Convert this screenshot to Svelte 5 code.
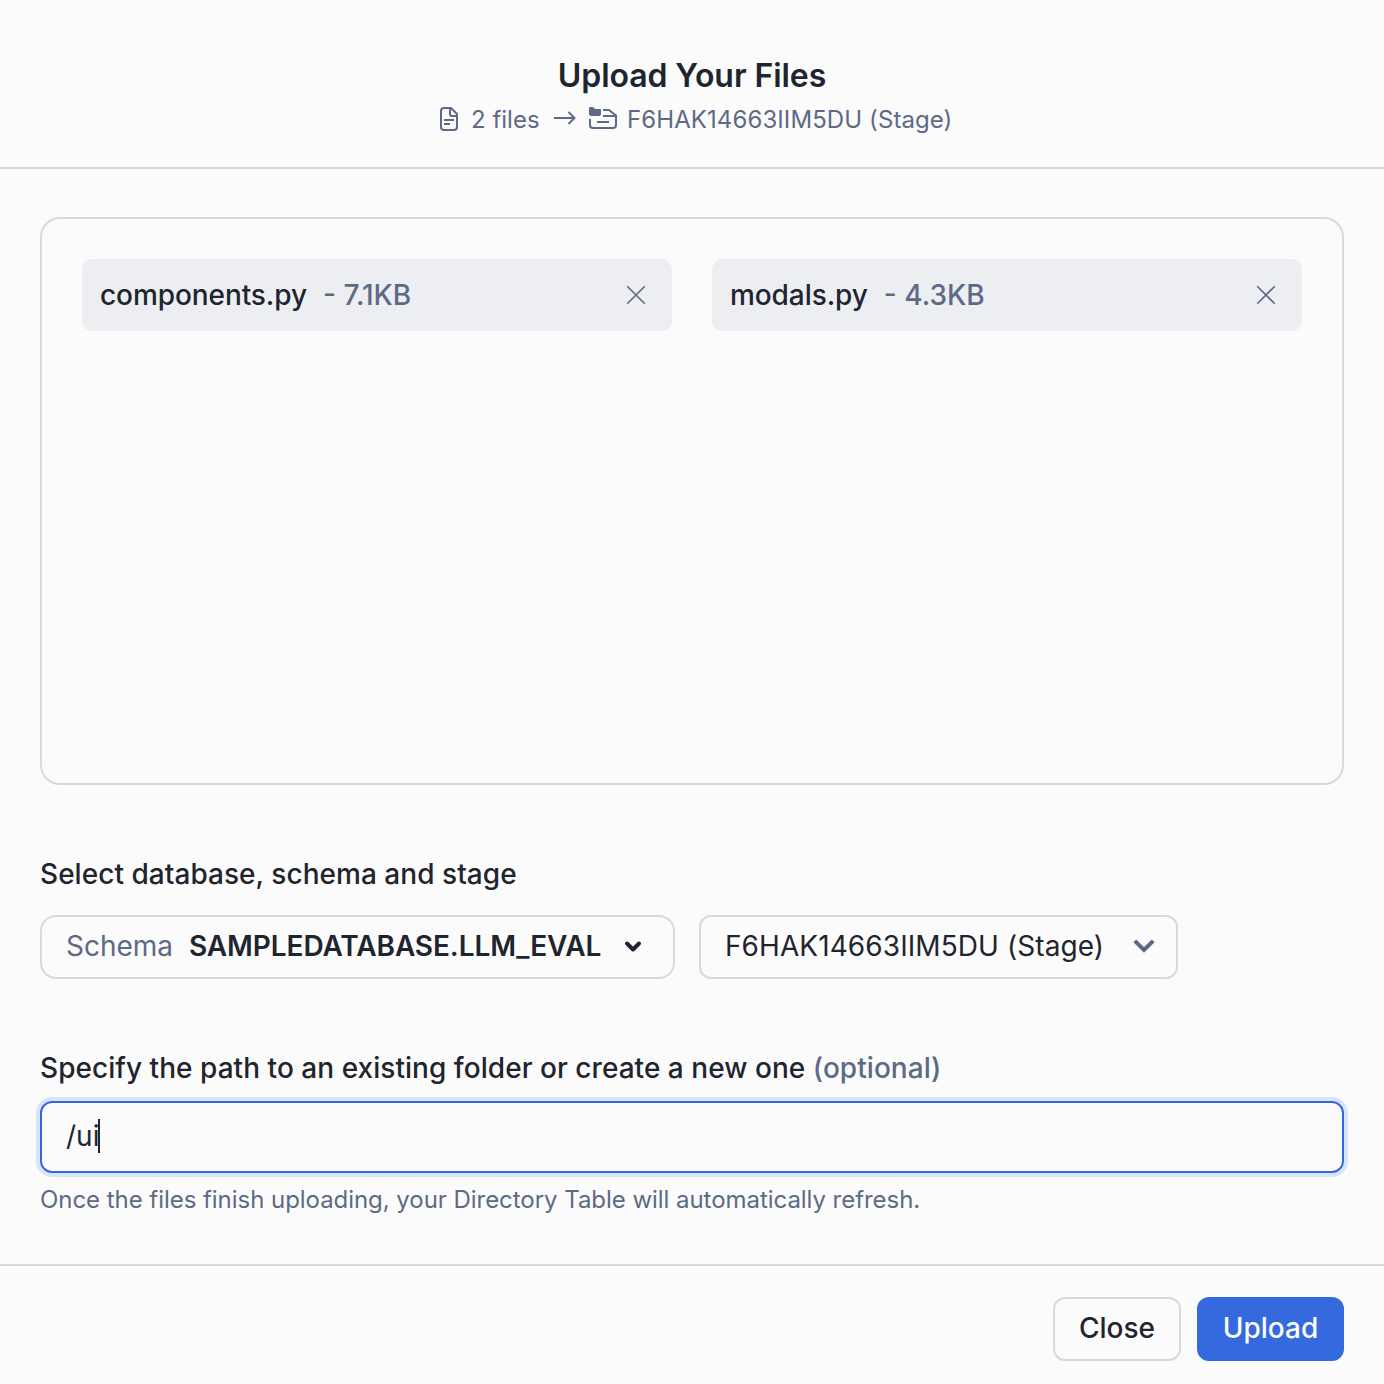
<script>
  const files = [
    { name: 'components.py', size: '7.1KB' },
    { name: 'modals.py', size: '4.3KB' }
  ];
  const stage = 'F6HAK14663IIM5DU (Stage)';
</script>

<div class="dialog">
  <header>
    <h1>Upload Your Files</h1>
    <div class="summary">
      <svg class="doc" width="20" height="26" viewBox="0 0 20 26" fill="none" stroke="currentColor" stroke-width="2">
        <path d="M5 2H12L18 8V21Q18 24 15 24H5Q2 24 2 21V5Q2 2 5 2Z" />
        <path d="M11 2V8Q11 10 13 10H18M5 14H15M5 18H11" />
      </svg>
      <span class="count">{files.length} files</span>
      <svg class="arrow" width="22" height="14" viewBox="0 0 22 14" fill="none" stroke="currentColor" stroke-width="1.9">
        <path d="M0 7H20.5M14.5 1L20.5 7L14.5 13" />
      </svg>
      <svg class="folder" width="28" height="24" viewBox="0 0 28 24">
        <path d="M0 2Q0 1 1 1H4L6 3H11Q12 3 12 4V8Q12 10 10 10H2Q0 10 0 8Z" fill="currentColor" />
        <path d="M14 4H20L27 9.5V19Q27 22 24 22H4Q1 22 1 19V13M14 10H27M8 16H20" fill="none" stroke="currentColor" stroke-width="2" />
      </svg>
      <span class="target">{stage}</span>
    </div>
  </header>

  <main>
    <div class="files">
      {#each files as file}
        <div class="file">
          <span class="name">{file.name}</span>
          <span class="size">- {file.size}</span>
          <svg width="20" height="20" viewBox="0 0 20 20" fill="none" stroke="currentColor" stroke-width="1.6">
            <path d="M1.2 1.2L18.8 18.8M18.8 1.2L1.2 18.8" />
          </svg>
        </div>
      {/each}
    </div>

    <div class="label select-label">Select database, schema and stage</div>
    <div class="selects">
      <div class="select schema">
        <span class="prefix">Schema</span>
        <span class="value">SAMPLEDATABASE.LLM_EVAL</span>
        <svg width="18" height="13" viewBox="0 0 18 13" fill="none" stroke="currentColor" stroke-width="4" stroke-linecap="round" stroke-linejoin="round">
          <path d="M3 3.5L9 9.5L15 3.5" />
        </svg>
      </div>
      <div class="select stage">
        <span class="value">{stage}</span>
        <svg width="22" height="14" viewBox="0 0 22 14" fill="none" stroke="currentColor" stroke-width="4">
          <path d="M1.8 1.8L11 11L20.2 1.8" />
        </svg>
      </div>
    </div>

    <div class="label path-label">Specify the path to an existing folder or create a new one <span>(optional)</span></div>
    <div class="input"><span>/ui</span><i></i></div>
    <div class="hint">Once the files finish uploading, your Directory Table will automatically refresh.</div>
  </main>

  <footer>
    <button class="close">Close</button>
    <button class="upload">Upload</button>
  </footer>
</div>

<style>
  :global(body) { background: #fbfbfb; }
  .dialog, .dialog * { box-sizing: border-box; }
  .dialog {
    width: 1384px;
    height: 1384px;
    display: flex;
    flex-direction: column;
    background: #fbfbfb;
    color: #1e252f;
    font-family: Inter, sans-serif;
    font-size: 28px;
    white-space: nowrap;
    overflow: hidden;
  }
  svg { flex: none; display: block; }
  header {
    height: 169px;
    border-bottom: 2px solid #d5d9e4;
    padding-top: 56px;
  }
  h1 {
    margin: 0;
    font-size: 32px;
    line-height: 40px;
    font-weight: 600;
    letter-spacing: -0.07px;
    text-align: center;
  }
  .summary {
    display: flex;
    align-items: center;
    height: 32px;
    margin-top: 7px;
    padding-left: 439px;
    font-size: 24px;
    color: #5d6a85;
  }
  .count { margin-left: 12px; width: 83px; }
  .arrow { margin-right: 13px; margin-top: -2px; }
  .folder { margin-top: -2px; }
  .target { margin-left: 10px; letter-spacing: 0.09px; }
  main { padding: 48px 40px 0; height: 1095px; }
  .files {
    height: 568px;
    border: 2px solid #d5d9e4;
    border-radius: 20px;
    padding: 40px;
    display: grid;
    grid-template-columns: 1fr 1fr;
    column-gap: 40px;
    align-items: start;
  }
  .file {
    height: 72px;
    border-radius: 10px;
    background: #edeef2;
    display: flex;
    align-items: center;
    padding: 0 26px 0 18px;
    font-weight: 500;
  }
  .file svg { margin-left: auto; color: #5d6a85; }
  .name { letter-spacing: -0.08px; }
  .size { margin-left: 16px; color: #5d6a85; }
  .label { font-weight: 500; line-height: 36px; letter-spacing: 0.04px; }
  .select-label { margin-top: 71px; }
  .selects { display: flex; gap: 24px; margin-top: 23px; }
  .select {
    height: 64px;
    border: 2px solid #d5d9e4;
    display: flex;
    align-items: center;
    padding: 0 0 2px 24px;
  }
  .schema { width: 635px; border-radius: 16px; }
  .schema .prefix { width: 123px; color: #5d6a85; }
  .schema .value { font-weight: 600; letter-spacing: -0.09px; }
  .schema svg { margin: 0 31px 0 auto; }
  .stage { width: 479px; border-radius: 12px; }
  .stage .value { letter-spacing: 0.08px; }
  .stage svg { margin: 0 21px 0 auto; color: #5d6a85; }
  .path-label { margin-top: 71px; }
  .path-label span { color: #5d6a85; }
  .input {
    height: 72px;
    margin-top: 15px;
    border: 2px solid #3569de;
    border-radius: 12px;
    box-shadow: 0 0 0 4px #d8e4fc;
    display: flex;
    align-items: center;
    padding: 0 0 2px 24px;
  }
  .input i { width: 2px; height: 34px; margin-left: -1px; background: #1e252f; }
  .hint {
    margin-top: 11px;
    font-size: 24px;
    line-height: 32px;
    letter-spacing: -0.045px;
    color: #5d6a85;
  }
  footer {
    height: 120px;
    border-top: 2px solid #d5d9e4;
    display: flex;
    justify-content: flex-end;
    gap: 16px;
    padding: 31px 40px 0;
  }
  button {
    height: 64px;
    padding: 0 0 2px;
    border: 2px solid #d5d9e4;
    border-radius: 12px;
    background: #fbfbfb;
    color: inherit;
    font: 500 28px Inter, sans-serif;
  }
  .close { width: 128px; }
  .upload { width: 147px; border-color: #3569de; background: #3569de; color: #fbfbfb; }
</style>
